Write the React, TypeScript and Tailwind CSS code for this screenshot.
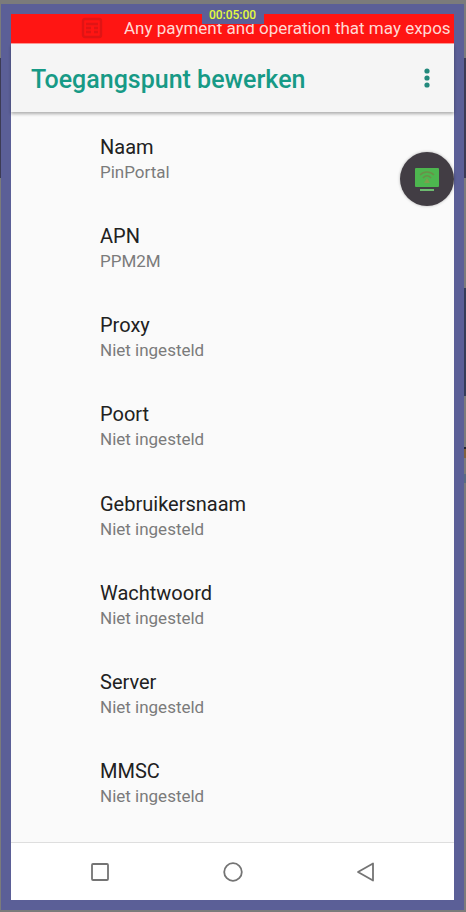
import type { ReactNode } from 'react';

type Setting = {
  label: string;
  value: string;
};

const settings: Setting[] = [
  { label: 'Naam', value: 'PinPortal' },
  { label: 'APN', value: 'PPM2M' },
  { label: 'Proxy', value: 'Niet ingesteld' },
  { label: 'Poort', value: 'Niet ingesteld' },
  { label: 'Gebruikersnaam', value: 'Niet ingesteld' },
  { label: 'Wachtwoord', value: 'Niet ingesteld' },
  { label: 'Server', value: 'Niet ingesteld' },
  { label: 'MMSC', value: 'Niet ingesteld' },
];

function WarningBanner() {
  return (
    <div className="flex h-[30px] shrink-0 items-center overflow-hidden border-b border-[#ff9a96] bg-[#ff1513] pb-[2px] text-[17px] leading-[20px] whitespace-nowrap text-[#ffd9d4]">
      <svg viewBox="0 0 22 22" className="ml-[70px] h-[22px] w-[22px] shrink-0" fill="none" stroke="#e01414" strokeWidth="2.4" aria-hidden>
        <rect x="2" y="2" width="18" height="18" rx="2" />
        <path d="M5 7h12M5 11h5M13 11h4M5 15h5M13 15h4" />
      </svg>
      <p className="ml-[21px]">Any payment and operation that may expos</p>
    </div>
  );
}

function AppBar() {
  return (
    <header className="z-10 flex h-[68px] shrink-0 items-center justify-between bg-[#f5f5f5] pr-[11px] pl-5 shadow-[0_2px_3px_rgba(0,0,0,0.3)]">
      <h1 className="pt-1 text-[25px] leading-8 font-medium text-[#179a86]">Toegangspunt bewerken</h1>
      <button type="button" aria-label="Meer opties" className="flex h-8 w-8 items-center justify-center">
        <svg viewBox="0 0 6 20" className="h-5 w-[6px]" fill="#23897c">
          <circle cx="3" cy="3" r="2.6" />
          <circle cx="3" cy="10" r="2.6" />
          <circle cx="3" cy="17" r="2.6" />
        </svg>
      </button>
    </header>
  );
}

function SettingRow({ label, value }: Setting) {
  return (
    <li className="flex flex-1">
      <button type="button" className="flex w-full flex-col items-start justify-center pl-[89px] text-left">
        <span className="text-[20px] leading-[26px] text-[#212121]">{label}</span>
        <span className="text-[17px] leading-6 text-[#7b7b7b]">{value}</span>
      </button>
    </li>
  );
}

function ScreenShareButton() {
  return (
    <button
      type="button"
      aria-label="Scherm delen"
      className="absolute top-[138px] right-0 z-20 flex h-[54px] w-[54px] items-center justify-center rounded-full bg-[#423d44] shadow-[0_0_3px_rgba(0,0,0,0.3)]"
    >
      <svg viewBox="0 0 26 26" className="h-[26px] w-[26px]" fill="none">
        <rect x="1" y="2" width="24" height="19" rx="1" fill="#4db64f" />
        <path d="M6 9c4-4 10-4 14 0M9 12c2-3 6-3 8 0" stroke="#6b8f48" strokeWidth="1.5" />
        <path d="M13 12l3 5h-6z" fill="#7d9e4c" />
        <path d="M6 24h14" stroke="#6dbb70" strokeWidth="2" />
      </svg>
    </button>
  );
}

function NavButton({ label, children }: { label: string; children: ReactNode }) {
  return (
    <button type="button" aria-label={label} className="flex h-10 w-10 items-center justify-center">
      <svg viewBox="0 0 20 20" className="h-5 w-5" fill="none" stroke="#747474" strokeWidth="1.8" strokeLinejoin="round">
        {children}
      </svg>
    </button>
  );
}

export default function App() {
  return (
    <div className="flex min-h-screen bg-[#7b7b7b] pt-1 pb-[2px] font-['Roboto',sans-serif]">
      {/* slivers of the dimmed page behind the device frame */}
      <div className="w-px shrink-0 pt-[54px]">
        <div className="h-[120px] bg-[#3c3b54]" />
      </div>

      <div className="relative flex min-w-0 flex-1 flex-col border-10 border-[#5b5f97] bg-[#fafafa]">
        <WarningBanner />
        <AppBar />
        <ul className="flex flex-1 flex-col pt-[2px] pb-[14px]">
          {settings.map((s) => (
            <SettingRow key={s.label} {...s} />
          ))}
        </ul>
        <nav className="flex h-[58px] shrink-0 items-center justify-around border-t border-[#dedede] bg-white px-[22px]">
          <NavButton label="Overzicht">
            <rect x="2" y="2" width="16" height="16" rx="1" />
          </NavButton>
          <NavButton label="Startscherm">
            <circle cx="10" cy="10" r="8.8" />
          </NavButton>
          <NavButton label="Terug">
            <path d="M17 1.5v17L2 10z" />
          </NavButton>
        </nav>

        <ScreenShareButton />
        <time className="absolute -top-2 left-1/2 z-30 flex h-[18px] w-[62px] -translate-x-1/2 items-center justify-center bg-[#5b5f97] text-[12px] leading-4 font-medium text-[#e4fb3c]">
          00:05:00
        </time>
      </div>

      <div className="w-[2px] shrink-0 pt-[54px]">
        <div className="h-[120px] bg-[#3c3b54]" />
        <div className="mt-[110px] h-[108px] bg-[#353d58]" />
        <div className="mt-[51px] h-[2px] bg-[#23232b]" />
        <div className="h-[9px] bg-[#80613f]" />
        <div className="mt-4 h-[9px] bg-[#596b80]" />
      </div>
    </div>
  );
}
